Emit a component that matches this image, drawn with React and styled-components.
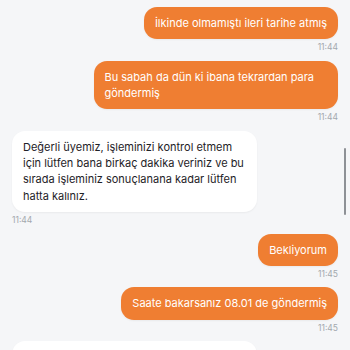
import React from "react";
import styled, { createGlobalStyle } from "styled-components";

const Global = createGlobalStyle`
  html, body { margin: 0; padding: 0; background: #f5f6f8; overflow: hidden; }
  body { font-family: Inter, "Noto Sans", sans-serif; }
`;

const Viewport = styled.div`
  position: relative;
  width: 350px;
  height: 350px;
  overflow: hidden;
  background: #f5f6f8;
`;

const Thread = styled.div`
  display: flex;
  flex-direction: column;
  padding: 7px 12px 0 12px;
`;

const Message = styled.div`
  display: flex;
  flex-direction: column;
  align-items: ${(p) => (p.$mine ? "flex-end" : "flex-start")};
  margin-bottom: 7.5px;
`;

const Bubble = styled.div`
  max-width: 75%;
  box-sizing: border-box;
  padding: 8px 11px;
  font-size: 11px;
  line-height: 16.3px;
  border-radius: 13px;
  background: ${(p) => (p.$mine ? "#ef7e32" : "#ffffff")};
  color: ${(p) => (p.$mine ? "#ffffff" : "#1e2227")};
  box-shadow: 0 1px 2px rgba(0, 0, 0, 0.05);
`;

const PendingBubble = styled.div`
  width: 245px;
  height: 40px;
  border-radius: 13px;
  background: #ffffff;
  box-shadow: 0 1px 2px rgba(0, 0, 0, 0.05);
`;

const Time = styled.div`
  margin-top: 3px;
  font-size: 8.5px;
  line-height: 11px;
  color: #a3a8ae;
`;

const ScrollThumb = styled.div`
  position: absolute;
  right: 4px;
  top: 148px;
  width: 2px;
  height: 67px;
  border-radius: 1px;
  background: #8e9196;
`;

const messages = [
  { mine: true, text: "İlkinde olmamıştı ileri tarihe atmış", time: "11:44" },
  { mine: true, text: "Bu sabah da dün ki ibana tekrardan para göndermiş", time: "11:44" },
  {
    mine: false,
    text: "Değerli üyemiz, işleminizi kontrol etmem için lütfen bana birkaç dakika veriniz ve bu sırada işleminiz sonuçlanana kadar lütfen hatta kalınız.",
    time: "11:44",
  },
  { mine: true, text: "Bekliyorum", time: "11:45" },
  { mine: true, text: "Saate bakarsanız 08.01 de göndermiş", time: "11:45" },
];

export default function App() {
  return (
    <Viewport>
      <Global />
      <Thread>
        {messages.map((m, i) => (
          <Message key={i} $mine={m.mine}>
            <Bubble $mine={m.mine}>{m.text}</Bubble>
            <Time>{m.time}</Time>
          </Message>
        ))}
        <Message $mine={false}>
          <PendingBubble />
        </Message>
      </Thread>
      <ScrollThumb />
    </Viewport>
  );
}
